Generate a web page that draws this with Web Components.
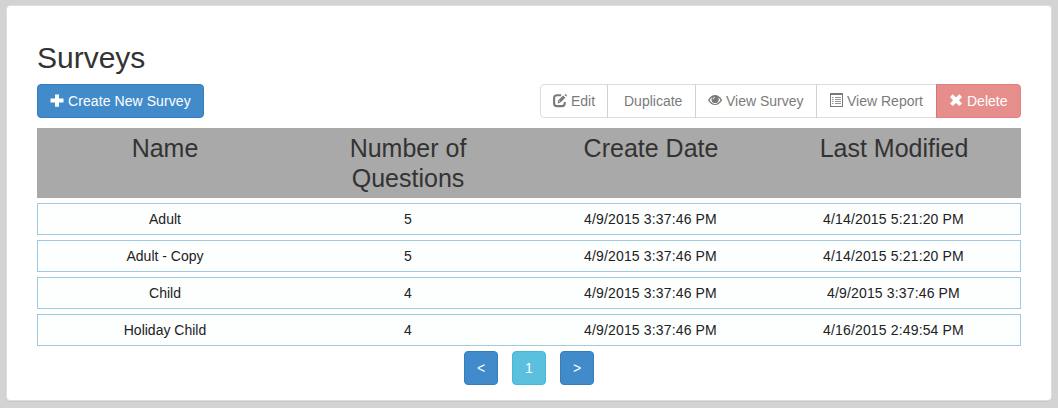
<!DOCTYPE html>
<html lang="en">
<head>
<meta charset="utf-8">
<title>Surveys</title>
<style>
body{margin:0;background:#d3d3d3;font:14px/20px "Liberation Sans",Arial,sans-serif;color:#333}
</style>
</head>
<body>
<survey-page></survey-page>
<script>
const ICONS = {
  plus: '<path d="M5 .5h4v4h4.500v4H9v4.300H5V8.500H.5v-4H5z"/>',
  edit: '<path d="M8.200 1.200H4.100Q1.100 1.200 1.100 4.200v5Q1.100 12.100 4 12.100h4.800Q11.700 12.100 11.700 9.200V8" fill="none" stroke="currentColor" stroke-width="2.100"/><path d="M4.600 9.500l.7-3.200L10.200 1.600l2.100 2.100L7.600 8.500z"/><path d="M11.500.9l1.100-1 1.500 1.500-1 1z"/><path d="M5.800 6.500l1.700 1.700" stroke="#fff" stroke-width=".7"/>',
  eye: '<path fill-rule="evenodd" d="M0 6.200Q3 1.100 7 1.100T14.200 6.200Q11 11.100 7 11.100T0 6.200zM1.500 6.200Q4 9.900 7 9.900T12.600 6.200Q11.500 4.400 9.900 3.300 10.700 4.300 10.700 5.400A3.600 3.600 0 0 1 3.500 5.400Q3.500 4.300 4.200 3.300 2.600 4.400 1.500 6.200z"/><path d="M5 5.100Q5.300 3.500 6.800 3.300" stroke="#fff" stroke-width="1" fill="none"/>',
  list: '<path fill-rule="evenodd" d="M1-1h13v14H1zM2 1v11h11V1z"/><path d="M3 3h1.500v1H3zM3 5h1.500v1H3zM3 7h1.500v1H3zM3 9h1.500v1H3zM6 3h6v1H6zM6 5h6v1H6zM6 7h6v1H6zM6 9h6v1H6z" opacity=".8"/>',
  remove: '<path d="M3.700.3L7 3.500l3.300-3.200 2.700 2.700-3 3.200 3 3.200-2.700 2.700L7 8.900l-3.300 3.200L1 9.400l3-3.200L1 3z"/>'
};
class UiIcon extends HTMLElement {
  connectedCallback() {
    this.attachShadow({mode:'open'}).innerHTML = `<style>:host{display:block;width:14px;height:14px;flex:none}svg{display:block;overflow:visible}</style><svg width="14" height="14" viewBox="0 0 14 14" fill="currentColor">${ICONS[this.getAttribute('name')] || ''}</svg>`;
  }
}
customElements.define('ui-icon', UiIcon);

class UiButton extends HTMLElement {
  connectedCallback() {
    const icon = this.getAttribute('icon');
    this.attachShadow({mode:'open'}).innerHTML = `<style>
      :host{display:flex;box-sizing:border-box;height:34px;padding:6px 12px;border:1px solid #ccc;border-radius:4px;background:#fff;color:#333;align-items:center;gap:4px;white-space:nowrap}
      :host([kind=primary]){background:#428bca;border-color:#357ebd;color:#fff}
      :host([kind=info]){background:#5bc0de;border-color:#46b8da;color:#fff}
      :host([kind=danger]){background:#d9534f;border-color:#d43f3a;color:#fff}
      :host([disabled]){opacity:.65}
      :host([square]){width:34px;justify-content:center;padding:0}
    </style>${icon ? `<ui-icon name="${icon}"></ui-icon>` : ''}<span><slot></slot></span>`;
  }
}
customElements.define('ui-button', UiButton);

class ButtonGroup extends HTMLElement {
  connectedCallback() {
    this.attachShadow({mode:'open'}).innerHTML = `<style>
      :host{display:flex}
      ::slotted(*){border-radius:0}
      ::slotted(:not(:first-child)){margin-left:-1px}
      ::slotted(:first-child){border-radius:4px 0 0 4px!important}
      ::slotted(:last-child){border-radius:0 4px 4px 0!important}
    </style><slot></slot>`;
  }
}
customElements.define('button-group', ButtonGroup);

class SurveyRow extends HTMLElement {
  connectedCallback() {
    this.attachShadow({mode:'open'}).innerHTML = `<style>
      :host{display:grid;grid-template-columns:repeat(4,1fr);box-sizing:border-box;height:32px;padding:5px;border:1px solid #a1c8e3;margin-top:5px;background:#fdfefe;color:#222;text-align:center}
      :host([head]){height:70px;margin:0;background:#a9a9a9;border-color:#a9a9a9;border-width:0 1px;color:#333;font-size:25px;line-height:30px}
      ::slotted(*){padding:0 14px 0 15px}
      :host(:not([head])) ::slotted(:nth-child(n+3)){letter-spacing:.15px;padding:0}
    </style><slot></slot>`;
  }
}
customElements.define('survey-row', SurveyRow);

class SurveyPage extends HTMLElement {
  connectedCallback() {
    this.attachShadow({mode:'open'}).innerHTML = `<style>
      :host{display:block;box-sizing:border-box;height:408px;padding:5px 6px 7px}
      main{box-sizing:border-box;height:396px;background:#fff;border:1px solid #ddd;border-radius:4px;padding:35px 30px 0;box-shadow:0 1px 1px rgba(0,0,0,.05)}
      h2{margin:0 0 10px;font-size:30px;font-weight:400;line-height:33px}
      .bar{display:flex;justify-content:space-between;margin-bottom:10px}
      .create{width:167px;letter-spacing:.08px}.edit{width:68px}.dup{width:89px;padding-left:16px}.vs{width:122px}.vr{width:121px}.del{width:85px}
      nav{display:flex;justify-content:center;gap:14px;margin-top:5px}
    </style>
    <main>
      <h2>Surveys</h2>
      <div class="bar">
        <ui-button class="create" kind="primary" icon="plus">Create New Survey</ui-button>
        <button-group>
          <ui-button class="edit" disabled icon="edit">Edit</ui-button>
          <ui-button class="dup" disabled>Duplicate</ui-button>
          <ui-button class="vs" disabled icon="eye">View Survey</ui-button>
          <ui-button class="vr" disabled icon="list">View Report</ui-button>
          <ui-button class="del" kind="danger" disabled icon="remove">Delete</ui-button>
        </button-group>
      </div>
      <survey-row head><span>Name</span><span>Number of<br>Questions</span><span>Create Date</span><span>Last Modified</span></survey-row>
      <survey-row><span>Adult</span><span>5</span><span>4/9/2015 3:37:46 PM</span><span>4/14/2015 5:21:20 PM</span></survey-row>
      <survey-row><span>Adult - Copy</span><span>5</span><span>4/9/2015 3:37:46 PM</span><span>4/14/2015 5:21:20 PM</span></survey-row>
      <survey-row><span>Child</span><span>4</span><span>4/9/2015 3:37:46 PM</span><span>4/9/2015 3:37:46 PM</span></survey-row>
      <survey-row><span>Holiday Child</span><span>4</span><span>4/9/2015 3:37:46 PM</span><span>4/16/2015 2:49:54 PM</span></survey-row>
      <nav><ui-button square kind="primary">&lt;</ui-button><ui-button square kind="info">1</ui-button><ui-button square kind="primary">&gt;</ui-button></nav>
    </main>`;
  }
}
customElements.define('survey-page', SurveyPage);
</script>
</body>
</html>
